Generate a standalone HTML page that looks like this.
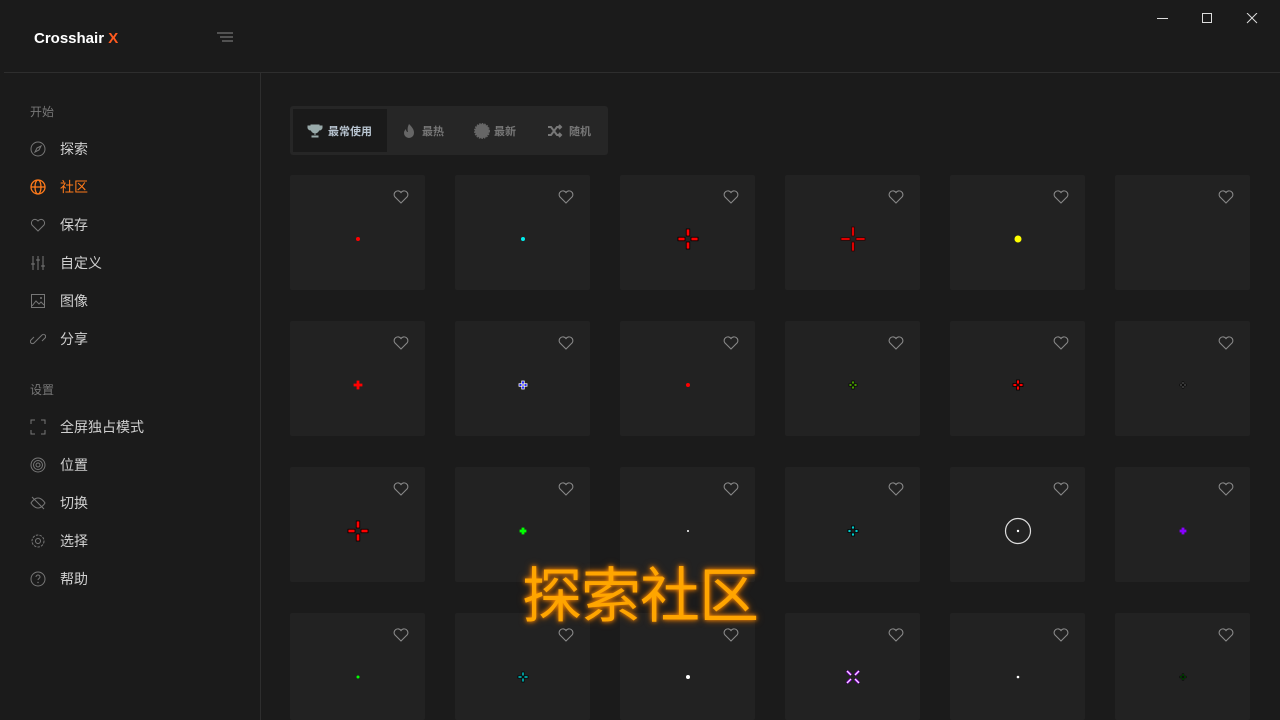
<!DOCTYPE html>
<html style="overflow:hidden;width:1280px;height:720px"><head><meta charset="utf-8"><style>
*{margin:0;padding:0;box-sizing:border-box}
body{width:1280px;height:720px;background:#1b1b1b;font-family:"Liberation Sans","Noto Sans CJK SC",sans-serif;position:relative;overflow:hidden;color:#ddd}
.abs{position:absolute}
.hline{left:4px;top:72px;width:1276px;height:1px;background:#2e2e2e}
.vline{left:260px;top:73px;width:1px;height:647px;background:#2e2e2e}
.logo{left:34px;top:30px;font-weight:bold;font-size:15px;color:#fff}
.logo span{color:#ff5a1f}
.sec{left:30px;font-size:12px;color:#777}
.item{left:30px;font-size:14px;color:#d0d0d0;display:flex;align-items:center;height:20px}
.item svg{width:16px;height:16px;margin-right:14px}
.tabs{left:290px;top:106px;width:318px;height:49px;background:#262626;border-radius:3px}
.tab{position:absolute;top:3px;height:43px;font-size:11px;color:#777;display:flex;align-items:center;font-weight:bold}
.card{position:absolute;width:135px;height:115px;background:#222;border-radius:2px}
.card .h{position:absolute;left:103px;top:15px}
.card .c{position:absolute;left:48px;top:44px}
.ov{left:522px;top:548px;font-size:60px;color:#ffa500;font-family:"Noto Sans CJK SC",sans-serif;letter-spacing:-1px;text-shadow:0 0 4px #ff8c00,0 0 8px #b35a00}
</style></head><body>
<div class="abs hline"></div><div class="abs vline"></div>
<div class="abs logo">Crosshair <span>X</span></div>
<svg class="abs" style="left:217px;top:32px" width="16" height="11"><path d="M0 1h16M3 5h13M5 9h11" stroke="#888" stroke-width="1"/></svg>
<svg class="abs" style="left:1157px;top:13px" width="110" height="12"><path d="M0 5.5h11" stroke="#ddd"/><rect x="45.5" y="0.5" width="9" height="9" fill="none" stroke="#ddd"/><path d="M90 0l10 10M100 0l-10 10" stroke="#ddd"/></svg>
<div class="abs sec" style="top:103px">开始</div>
<div class="abs item" style="top:139px"><svg viewBox="0 0 16 16"><circle cx="8" cy="8" r="7" fill="none" stroke="#777"/><path d="M5 11l2-4 4-2-2 4z" fill="none" stroke="#777"/></svg>探索</div>
<div class="abs item" style="top:177px;color:#ff7a1a"><svg viewBox="0 0 16 16"><circle cx="8" cy="8" r="7" fill="none" stroke="#ff7a1a" stroke-width="1.3"/><ellipse cx="8" cy="8" rx="3" ry="7" fill="none" stroke="#ff7a1a" stroke-width="1.3"/><path d="M1 8h14" stroke="#ff7a1a" stroke-width="1.3"/></svg>社区</div>
<div class="abs item" style="top:215px"><svg viewBox="0 0 16 16"><path d="M8 14L2 8a3.5 3.5 0 016-4 3.5 3.5 0 016 4z" fill="none" stroke="#777"/></svg>保存</div>
<div class="abs item" style="top:253px"><svg viewBox="0 0 16 16"><path d="M3 1v14M8 1v14M13 1v14M1 9h4M6 5h4M11 11h4" stroke="#777"/></svg>自定义</div>
<div class="abs item" style="top:291px"><svg viewBox="0 0 16 16"><rect x="1.5" y="1.5" width="13" height="13" fill="none" stroke="#777"/><path d="M2 13l4-5 3 3 2-2 3 3" fill="none" stroke="#777"/><circle cx="11" cy="5" r="1" fill="#777"/></svg>图像</div>
<div class="abs item" style="top:329px"><svg viewBox="0 0 16 16"><path d="M7 9l-3 3a2 2 0 01-3-3l3-3M9 7l3-3a2 2 0 013 3l-3 3M6 10l4-4" fill="none" stroke="#777"/></svg>分享</div>
<div class="abs sec" style="top:381px">设置</div>
<div class="abs item" style="top:417px"><svg viewBox="0 0 16 16"><path d="M1 5V1h4M11 1h4v4M15 11v4h-4M5 15H1v-4" fill="none" stroke="#777"/></svg>全屏独占模式</div>
<div class="abs item" style="top:455px"><svg viewBox="0 0 16 16"><circle cx="8" cy="8" r="7" fill="none" stroke="#777"/><circle cx="8" cy="8" r="4.5" fill="none" stroke="#777"/><circle cx="8" cy="8" r="2" fill="none" stroke="#777"/></svg>位置</div>
<div class="abs item" style="top:493px"><svg viewBox="0 0 16 16"><path d="M1 8s3-5 7-5 7 5 7 5-3 5-7 5-7-5-7-5z" fill="none" stroke="#777"/><path d="M2 2l12 12" stroke="#777"/></svg>切换</div>
<div class="abs item" style="top:531px"><svg viewBox="0 0 16 16"><circle cx="8" cy="8" r="2.5" fill="none" stroke="#777"/><circle cx="8" cy="8" r="6" fill="none" stroke="#777" stroke-dasharray="2.5 1.2"/></svg>选择</div>
<div class="abs item" style="top:569px"><svg viewBox="0 0 16 16"><circle cx="8" cy="8" r="7" fill="none" stroke="#777"/><path d="M6 6a2 2 0 114 0c0 1.5-2 1.5-2 3" fill="none" stroke="#777"/><circle cx="8" cy="11.5" r=".7" fill="#777"/></svg>帮助</div>
<div class="abs tabs">
<div class="tab" style="left:3px;width:94px;background:#1a1a1a;color:#b8c4d0;padding-left:14px"><svg width="16" height="14" viewBox="0 0 16 14" style="margin-right:5px"><path d="M4 1h8v4a4 4 0 01-8 0zM4 2H1v2a3 3 0 003 2M12 2h3v2a3 3 0 01-3 2M8 9v2M5 13h6v-1H5z" fill="#9aa" stroke="#9aa"/></svg>最常使用</div>
<div class="tab" style="left:112px"><svg width="14" height="16" style="margin-right:6px"><path d="M7 1c4 4 5 6 5 9a5 5 0 01-10 0c0-2 1-3 2-4 0 2 1 3 2 3-1-3 0-6 1-8z" fill="#666"/></svg>最热</div>
<div class="tab" style="left:184px"><svg width="16" height="16" style="margin-right:4px"><circle cx="8" cy="8" r="7" fill="#666" stroke="#666" stroke-dasharray="1.5 1" stroke-width="2"/></svg>最新</div>
<div class="tab" style="left:257px"><svg width="16" height="14" style="margin-right:6px"><path d="M1 3h3l6 8h4M1 11h3l6-8h4M12 1l2 2-2 2M12 9l2 2-2 2" fill="none" stroke="#777" stroke-width="2"/></svg>随机</div>
</div>
<div id="g"></div>
<div class="abs ov">探索社区</div>
<script>
var H='<svg class="h" width="16" height="14" viewBox="0 0 16 14"><path d="M8 13L1.8 6.8a3.4 3.4 0 016.2-4.3 3.4 3.4 0 016.2 4.3z" fill="none" stroke="#888" stroke-width="1.1"/></svg>';
function dot(c,r){return '<circle cx="20" cy="20" r="'+r+'" fill="'+c+'"/>'}
function cross(c,g,l,w,o){o=o||'#000';var s='';var h=w/2;
s+='<rect x="'+(20-g-l)+'" y="'+(20-h)+'" width="'+l+'" height="'+w+'" fill="'+c+'" stroke="'+o+'" stroke-width="0.8"/>';
s+='<rect x="'+(20+g)+'" y="'+(20-h)+'" width="'+l+'" height="'+w+'" fill="'+c+'" stroke="'+o+'" stroke-width="0.8"/>';
s+='<rect x="'+(20-h)+'" y="'+(20-g-l)+'" width="'+w+'" height="'+l+'" fill="'+c+'" stroke="'+o+'" stroke-width="0.8"/>';
s+='<rect x="'+(20-h)+'" y="'+(20+g)+'" width="'+w+'" height="'+l+'" fill="'+c+'" stroke="'+o+'" stroke-width="0.8"/>';return s}
var C=[
dot('#f00',2),dot('#0ee',2),cross('#f00',3,7,3.5),cross('#f00',3,9,2.5,'#300'),dot('#ff0',3.5),'',
cross('#f00',0,4,2,'#f00'),cross('#00f',1,3,2.5,'#fff'),dot('#f00',2),cross('#7f0',1,3,2),cross('#f00',1,4,3),cross('#fff',1,2,1.5),
cross('#f00',3,7,3.5),cross('#0f0',0,3,2,'#0f0'),dot('#fff',1),cross('#0cc',2,3,3),'<circle cx="20" cy="20" r="12.5" fill="none" stroke="#ddd" stroke-width="1.2"/>'+dot('#fff',1.2),cross('#80f',0,3,2,'#80f'),
dot('#0f0',1.5),cross('#0ff',1,4,2),dot('#fff',2),'<path d="M14 14l4 4M26 14l-4 4M14 26l4-4M26 26l-4-4" stroke="#a0f" stroke-width="2.5"/><path d="M14 14l4 4M26 14l-4 4M14 26l4-4M26 26l-4-4" stroke="#fff" stroke-width="1"/>',dot('#fff',1.3),cross('#0f0',1,2,1.5)];
var h='';for(var r=0;r<4;r++)for(var c=0;c<6;c++){var t=175+r*146;h+='<div class="card" style="left:'+(290+c*165)+'px;top:'+t+'px;height:'+Math.min(115,720-t)+'px">'+H+'<svg class="c" width="40" height="40">'+C[r*6+c]+'</svg></div>'}
document.getElementById('g').innerHTML=h;
</script>
</body></html>
